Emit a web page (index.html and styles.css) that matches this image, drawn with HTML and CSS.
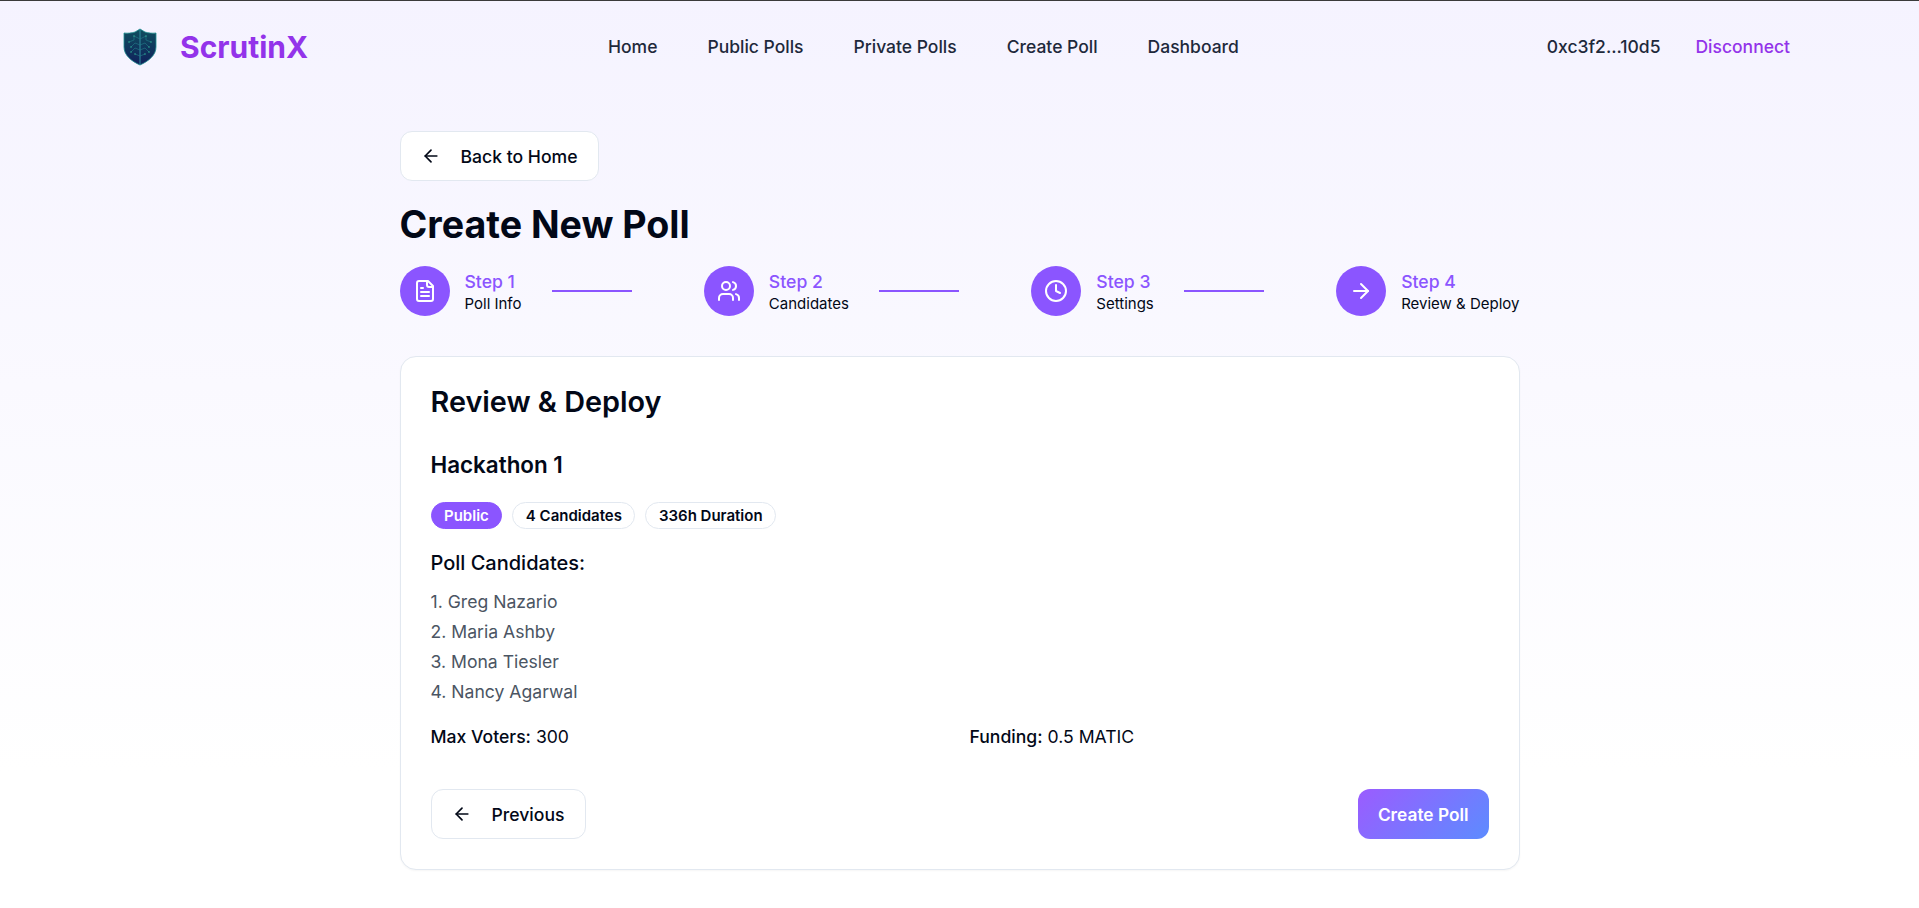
FILE: index.html
```html
<!DOCTYPE html>
<html lang="en">

<head>
  <meta charset="UTF-8">
  <meta name="viewport" content="width=device-width, initial-scale=1.0">
  <title>ScrutinX</title>
  <link rel="stylesheet" href="styles.css">
</head>

<body>
  <header class="navbar">
    <a class="brand" href="#">
      <svg class="shield" viewBox="0 0 34 38" width="34" height="38">
        <defs>
          <linearGradient id="shieldFill" x1="0" y1="0" x2="0" y2="1">
            <stop offset="0" stop-color="#0f4f5f" />
            <stop offset="1" stop-color="#10205c" />
          </linearGradient>
        </defs>
        <path d="M17 1 L22 4 C25 5 29 5.500 33 5 V19 C33 27 26 33 17 37 C8 33 1 27 1 19 V5 C5 5.500 9 5 12 4 Z" fill="url(#shieldFill)" stroke="#1f8f8f" stroke-width="0.800" />
        <path d="M17 1 V37" stroke="#2f8f9f" stroke-width="1" />
        <path d="M17 11 L11 8 V12 L6 14 M17 17 L12 15 L8 19 M17 22 L12 20 L8 24 M17 28 L12 26 M17 11 L23 8 V12 L28 14 M17 17 L22 15 L26 19 M17 22 L22 20 L26 24 M17 28 L22 26" stroke="#23808a" stroke-width="0.600" fill="none" />
        <g fill="#2fa893">
          <circle cx="11" cy="8" r="0.800" />
          <circle cx="6" cy="14" r="0.800" />
          <circle cx="8" cy="19" r="0.800" />
          <circle cx="8" cy="24" r="0.800" />
          <circle cx="12" cy="26" r="0.800" />
          <circle cx="23" cy="8" r="0.800" />
          <circle cx="28" cy="14" r="0.800" />
          <circle cx="26" cy="19" r="0.800" />
          <circle cx="26" cy="24" r="0.800" />
          <circle cx="22" cy="26" r="0.800" />
        </g>
      </svg>
      <span class="brand-name">ScrutinX</span>
    </a>
    <nav class="nav-links">
      <a href="#">Home</a>
      <a href="#">Public Polls</a>
      <a href="#">Private Polls</a>
      <a href="#">Create Poll</a>
      <a href="#">Dashboard</a>
    </nav>
    <div class="wallet">
      <span>0xc3f2...10d5</span>
      <a class="disconnect" href="#">Disconnect</a>
    </div>
  </header>

  <main class="page">
    <a class="btn btn-back" href="#">
      <svg class="icon" viewBox="0 0 24 24"><path d="M19 12H5" /><path d="M12 19l-7-7 7-7" /></svg>
      Back to Home
    </a>

    <h1 class="page-title">Create New Poll</h1>

    <div class="steps">
      <div class="step">
        <div class="step-circle">
          <svg class="icon" viewBox="0 0 24 24">
            <path d="M15 2H6a2 2 0 0 0-2 2v16a2 2 0 0 0 2 2h12a2 2 0 0 0 2-2V7z" />
            <path d="M14 2v4a2 2 0 0 0 2 2h4" />
            <path d="M10 9H8" /><path d="M16 13H8" /><path d="M16 17H8" />
          </svg>
        </div>
        <div class="step-text">
          <span class="step-num">Step 1</span>
          <span class="step-label">Poll Info</span>
        </div>
        <div class="step-line"></div>
      </div>
      <div class="step">
        <div class="step-circle">
          <svg class="icon" viewBox="0 0 24 24">
            <path d="M16 21v-2a4 4 0 0 0-4-4H6a4 4 0 0 0-4 4v2" />
            <circle cx="9" cy="7" r="4" />
            <path d="M22 21v-2a4 4 0 0 0-3-3.870" />
            <path d="M16 3.130a4 4 0 0 1 0 7.750" />
          </svg>
        </div>
        <div class="step-text">
          <span class="step-num">Step 2</span>
          <span class="step-label">Candidates</span>
        </div>
        <div class="step-line"></div>
      </div>
      <div class="step">
        <div class="step-circle">
          <svg class="icon" viewBox="0 0 24 24">
            <circle cx="12" cy="12" r="10" />
            <path d="M12 6v6l4 2" />
          </svg>
        </div>
        <div class="step-text">
          <span class="step-num">Step 3</span>
          <span class="step-label">Settings</span>
        </div>
        <div class="step-line"></div>
      </div>
      <div class="step">
        <div class="step-circle">
          <svg class="icon" viewBox="0 0 24 24"><path d="M5 12h14" /><path d="M12 5l7 7-7 7" /></svg>
        </div>
        <div class="step-text">
          <span class="step-num">Step 4</span>
          <span class="step-label">Review &amp; Deploy</span>
        </div>
      </div>
    </div>

    <section class="card">
      <h2 class="card-title">Review &amp; Deploy</h2>
      <h3 class="poll-name">Hackathon 1</h3>
      <div class="badges">
        <span class="badge badge-solid">Public</span>
        <span class="badge">4 Candidates</span>
        <span class="badge">336h Duration</span>
      </div>
      <h4 class="list-title">Poll Candidates:</h4>
      <ul class="candidates">
        <li>1. Greg Nazario</li>
        <li>2. Maria Ashby</li>
        <li>3. Mona Tiesler</li>
        <li>4. Nancy Agarwal</li>
      </ul>
      <div class="details">
        <p><span class="detail-key">Max Voters:</span> 300</p>
        <p><span class="detail-key">Funding:</span> 0.5 MATIC</p>
      </div>
      <div class="actions">
        <a class="btn" href="#">
          <svg class="icon" viewBox="0 0 24 24"><path d="M19 12H5" /><path d="M12 19l-7-7 7-7" /></svg>
          Previous
        </a>
        <a class="btn btn-primary" href="#">Create Poll</a>
      </div>
    </section>
  </main>
</body>

</html>
```

FILE: styles.css
```css
* {
  box-sizing: border-box;
}

body {
  margin: 0;
  min-height: 908px;
  border-top: 1px solid #3a3a3a;
  background: linear-gradient(to bottom, #f5f3ff, #ffffff 85%);
  font-family: Inter, "Liberation Sans", sans-serif;
  color: #020817;
}

a {
  color: inherit;
  text-decoration: none;
}

.navbar {
  display: flex;
  align-items: center;
  justify-content: space-between;
  height: 91px;
  padding: 0 129px 0 123px;
}

.brand {
  display: flex;
  align-items: center;
  gap: 23px;
}

.shield {
  display: block;
}

.brand-name {
  font-size: 30px;
  font-weight: 700;
  color: #9333ea;
}

.nav-links {
  display: flex;
  gap: 50px;
  margin-right: 8px;
  font-size: 17.5px;
  font-weight: 500;
  color: #1e293b;
}

.wallet {
  display: flex;
  gap: 35px;
  font-size: 17.5px;
  font-weight: 500;
  color: #1e293b;
}

.disconnect {
  color: #9333ea;
}

.page {
  width: 1120px;
  margin: 0 auto;
  padding-top: 39px;
}

.btn {
  display: inline-flex;
  align-items: center;
  gap: 20px;
  height: 50px;
  padding: 0 20px;
  border: 1px solid #e2e8f0;
  border-radius: 12px;
  background: #fff;
  font-size: 17.6px;
  font-weight: 500;
}

.btn .icon {
  width: 20px;
  height: 20px;
  stroke: #020817;
}

.icon {
  fill: none;
  stroke: #fff;
  stroke-width: 2;
  stroke-linecap: round;
  stroke-linejoin: round;
}

.page-title {
  margin: 22px 0 0;
  font-size: 37.6px;
  line-height: 44px;
  font-weight: 700;
}

.steps {
  display: flex;
  justify-content: space-between;
  margin-top: 19px;
}

.step {
  display: flex;
  align-items: center;
}

.step-circle {
  display: flex;
  align-items: center;
  justify-content: center;
  width: 50px;
  height: 50px;
  border-radius: 50%;
  background: #8b55ff;
}

.step-circle .icon {
  width: 24px;
  height: 24px;
}

.step-text {
  display: flex;
  flex-direction: column;
  margin-left: 15px;
  padding-top: 2px;
}

.step-num {
  font-size: 17.6px;
  line-height: 23px;
  font-weight: 500;
  color: #8b55ff;
}

.step-label {
  font-size: 15px;
  line-height: 21px;
}

.step-line {
  width: 80px;
  height: 2px;
  margin-left: 30.500px;
  background: #8b55ff;
}

.card {
  margin-top: 40px;
  padding: 27px 30px 30px;
  border: 1px solid #e2e8f0;
  border-radius: 16px;
  background: #fff;
  box-shadow: 0 1px 2px rgba(0, 0, 0, 0.04);
}

.card-title {
  margin: 0;
  font-size: 28.8px;
  line-height: 36px;
  font-weight: 600;
}

.poll-name {
  margin: 30px 0 0;
  font-size: 22.4px;
  line-height: 30px;
  font-weight: 600;
}

.badges {
  display: flex;
  gap: 10px;
  margin-top: 22px;
}

.badge {
  height: 27px;
  padding: 0 12.500px;
  border: 1px solid #e2e8f0;
  border-radius: 14px;
  font-size: 15px;
  line-height: 25px;
  font-weight: 600;
}

.badge-solid {
  border-color: #8b55ff;
  background: #8b55ff;
  color: #fff;
}

.list-title {
  margin: 20px 0 0;
  font-size: 20px;
  line-height: 28px;
  font-weight: 500;
}

.candidates {
  margin: 10px 0 0;
  padding: 0;
  list-style: none;
  font-size: 17.6px;
  line-height: 30px;
  color: #4b5563;
}

.details {
  display: grid;
  grid-template-columns: 1fr 1fr;
  gap: 20px;
  margin-top: 18px;
  font-size: 17.6px;
  line-height: 24px;
}

.details p {
  margin: 0;
}

.detail-key {
  font-weight: 500;
}

.actions {
  display: flex;
  justify-content: space-between;
  margin-top: 40px;
}

.btn-primary {
  border: none;
  background: linear-gradient(135deg, #9b5cff, #5c8cff);
  color: #fff;
  font-size: 17.3px;
  font-weight: 600;
}
```
